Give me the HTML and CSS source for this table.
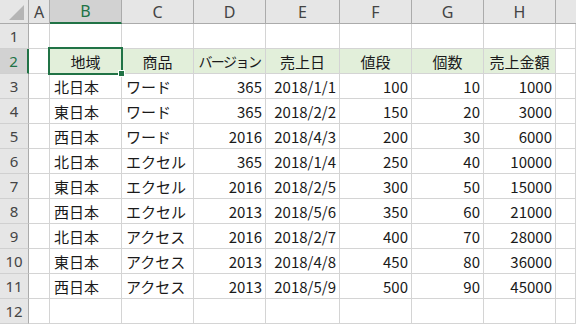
FILE: index.html
```html
<!DOCTYPE html>
<html lang="ja">
<head>
<meta charset="utf-8">
<link rel="stylesheet" href="styles.css">
</head>
<body>
<div class="sheet">
  <div class="corner"><span class="tri"></span></div>
  <div class="ch">A</div><div class="ch sel">B</div><div class="ch">C</div><div class="ch">D</div><div class="ch">E</div><div class="ch">F</div><div class="ch">G</div><div class="ch">H</div><div class="ch last"></div>

  <div class="rh">1</div><div class="c"></div><div class="c"></div><div class="c"></div><div class="c"></div><div class="c"></div><div class="c"></div><div class="c"></div><div class="c"></div><div class="c"></div>

  <div class="rh sel">2</div><div class="c"></div>
  <div class="c hd active">地域<span class="selbox"><span class="handle"></span></span></div>
  <div class="c hd">商品</div><div class="c hd"><span class="narrow">バージョン</span></div><div class="c hd">売上日</div><div class="c hd">値段</div><div class="c hd">個数</div><div class="c hd">売上金額</div><div class="c"></div>

  <div class="rh">3</div><div class="c"></div><div class="c t">北日本</div><div class="c t">ワード</div><div class="c n">365</div><div class="c n">2018/1/1</div><div class="c n">100</div><div class="c n">10</div><div class="c n">1000</div><div class="c"></div>
  <div class="rh">4</div><div class="c"></div><div class="c t">東日本</div><div class="c t">ワード</div><div class="c n">365</div><div class="c n">2018/2/2</div><div class="c n">150</div><div class="c n">20</div><div class="c n">3000</div><div class="c"></div>
  <div class="rh">5</div><div class="c"></div><div class="c t">西日本</div><div class="c t">ワード</div><div class="c n">2016</div><div class="c n">2018/4/3</div><div class="c n">200</div><div class="c n">30</div><div class="c n">6000</div><div class="c"></div>
  <div class="rh">6</div><div class="c"></div><div class="c t">北日本</div><div class="c t">エクセル</div><div class="c n">365</div><div class="c n">2018/1/4</div><div class="c n">250</div><div class="c n">40</div><div class="c n">10000</div><div class="c"></div>
  <div class="rh">7</div><div class="c"></div><div class="c t">東日本</div><div class="c t">エクセル</div><div class="c n">2016</div><div class="c n">2018/2/5</div><div class="c n">300</div><div class="c n">50</div><div class="c n">15000</div><div class="c"></div>
  <div class="rh">8</div><div class="c"></div><div class="c t">西日本</div><div class="c t">エクセル</div><div class="c n">2013</div><div class="c n">2018/5/6</div><div class="c n">350</div><div class="c n">60</div><div class="c n">21000</div><div class="c"></div>
  <div class="rh">9</div><div class="c"></div><div class="c t">北日本</div><div class="c t">アクセス</div><div class="c n">2016</div><div class="c n">2018/2/7</div><div class="c n">400</div><div class="c n">70</div><div class="c n">28000</div><div class="c"></div>
  <div class="rh">10</div><div class="c"></div><div class="c t">東日本</div><div class="c t">アクセス</div><div class="c n">2013</div><div class="c n">2018/4/8</div><div class="c n">450</div><div class="c n">80</div><div class="c n">36000</div><div class="c"></div>
  <div class="rh">11</div><div class="c"></div><div class="c t">西日本</div><div class="c t">アクセス</div><div class="c n">2013</div><div class="c n">2018/5/9</div><div class="c n">500</div><div class="c n">90</div><div class="c n">45000</div><div class="c"></div>
  <div class="rh">12</div><div class="c"></div><div class="c"></div><div class="c"></div><div class="c"></div><div class="c"></div><div class="c"></div><div class="c"></div><div class="c"></div><div class="c"></div>
</div>
</body>
</html>
```

FILE: styles.css
```css
html, body {
  margin: 0;
  padding: 0;
  background: #ffffff;
}
body {
  width: 576px;
  height: 324px;
  overflow: hidden;
  font-family: "Noto Sans CJK JP", "Noto Sans", sans-serif;
  font-size: 15px;
  color: #1a1a1a;
}
.sheet {
  display: grid;
  grid-template-columns: 29px 21px 72px 72px 72px 74px 72px 72px 72px 1fr;
  grid-template-rows: 24px repeat(12, 25px);
  width: 576px;
}
.sheet > div {
  box-sizing: border-box;
  border-right: 1px solid #d4d4d4;
  border-bottom: 1px solid #d4d4d4;
  display: flex;
  align-items: center;
  white-space: nowrap;
  overflow: visible;
  line-height: 1;
}
.corner {
  background: #e6e6e6;
  position: relative;
  border-right-color: #ababab !important;
  border-bottom-color: #ababab !important;
}
.tri {
  position: absolute;
  right: 4px;
  bottom: 3px;
  width: 0;
  height: 0;
  border-left: 15px solid transparent;
  border-bottom: 15px solid #b5b5b5;
}
.ch {
  background: #e6e6e6;
  justify-content: center;
  color: #444;
  font-family: "Noto Sans", "Segoe UI", sans-serif;
  font-size: 16px;
  border-right-color: #ababab !important;
  border-bottom-color: #ababab !important;
}
.ch.sel {
  background: #d2d2d2;
  color: #217346;
  border-bottom: 2px solid #217346 !important;
}
.ch.last {
  border-right: none !important;
}
.rh {
  background: #e6e6e6;
  justify-content: center;
  color: #444;
  font-family: "Noto Sans", "Segoe UI", sans-serif;
  font-size: 15px;
  border-right-color: #ababab !important;
  border-bottom-color: #d0d0d0 !important;
}
.rh.sel {
  background: #d2d2d2;
  color: #217346;
  border-right: 2px solid #217346 !important;
}
.c.hd {
  background: #e2efda;
  justify-content: center;
}
.narrow {
  letter-spacing: -1.5px;
  font-size: 14px;
}
.c.t {
  justify-content: flex-start;
  padding-left: 4px;
}
.c.n {
  justify-content: flex-end;
  padding-right: 3px;
}
.active {
  position: relative;
}
.selbox {
  position: absolute;
  left: -2px;
  top: -2px;
  right: -2px;
  bottom: -2px;
  border: 2px solid #217346;
  pointer-events: none;
}
.handle {
  position: absolute;
  right: -4px;
  bottom: -4px;
  width: 5px;
  height: 5px;
  background: #217346;
  border: 1px solid #ffffff;
}
```
